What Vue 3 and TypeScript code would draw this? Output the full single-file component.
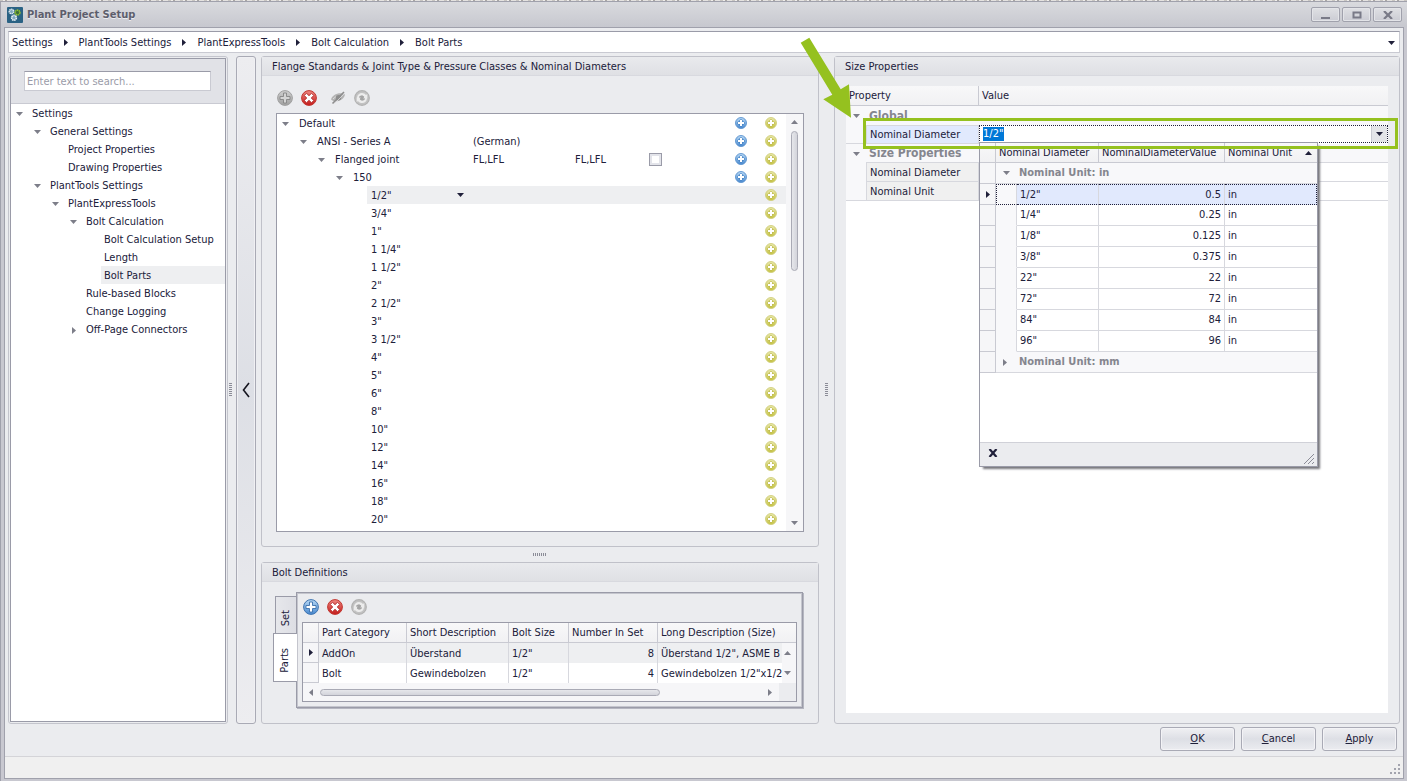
<script setup lang="ts">
import { onMounted, ref } from 'vue'

interface NavNode {
  label: string
  level: number
  state?: 'open' | 'closed'
  selected?: boolean
}

interface FlangeNode {
  label: string
  level: number
  open?: boolean
  region?: string
  joint?: string
  checkbox?: boolean
  blue?: boolean
  selected?: boolean
}

const crumbs: string[] = ['Settings', 'PlantTools Settings', 'PlantExpressTools', 'Bolt Calculation', 'Bolt Parts']

const navNodes: NavNode[] = [
  { label: 'Settings', level: 0, state: 'open' },
  { label: 'General Settings', level: 1, state: 'open' },
  { label: 'Project Properties', level: 2 },
  { label: 'Drawing Properties', level: 2 },
  { label: 'PlantTools Settings', level: 1, state: 'open' },
  { label: 'PlantExpressTools', level: 2, state: 'open' },
  { label: 'Bolt Calculation', level: 3, state: 'open' },
  { label: 'Bolt Calculation Setup', level: 4 },
  { label: 'Length', level: 4 },
  { label: 'Bolt Parts', level: 4, selected: true },
  { label: 'Rule-based Blocks', level: 3 },
  { label: 'Change Logging', level: 3 },
  { label: 'Off-Page Connectors', level: 3, state: 'closed' },
]

const sizes: string[] = [
  '1/2"', '3/4"', '1"', '1 1/4"', '1 1/2"', '2"', '2 1/2"', '3"', '3 1/2"',
  '4"', '5"', '6"', '8"', '10"', '12"', '14"', '16"', '18"', '20"',
]

const flangeNodes: FlangeNode[] = [
  { label: 'Default', level: 0, open: true, blue: true },
  { label: 'ANSI - Series A', level: 1, open: true, region: '(German)', blue: true },
  { label: 'Flanged joint', level: 2, open: true, region: 'FL,LFL', joint: 'FL,LFL', checkbox: true, blue: true },
  { label: '150', level: 3, open: true, blue: true },
  ...sizes.map((label, i) => ({ label, level: 4, selected: i === 0 })),
]

const parts = [
  { category: 'AddOn', short: 'Überstand', size: '1/2"', count: 8, long: 'Überstand 1/2", ASME B', current: true },
  { category: 'Bolt', short: 'Gewindebolzen', size: '1/2"', count: 4, long: 'Gewindebolzen 1/2"x1/2', current: false },
]

const diameters = [
  { name: '1/2"', value: '0.5' },
  { name: '1/4"', value: '0.25' },
  { name: '1/8"', value: '0.125' },
  { name: '3/8"', value: '0.375' },
  { name: '22"', value: '22' },
  { name: '72"', value: '72' },
  { name: '84"', value: '84' },
  { name: '96"', value: '96' },
]

const diameter = ref('1/2"')
const search = ref('')
const diameterInput = ref<HTMLInputElement | null>(null)

onMounted(() => {
  diameterInput.value?.focus()
  diameterInput.value?.select()
})
</script>

<template>
  <div class="desktop">
    <svg class="defs" aria-hidden="true">
      <defs>
        <linearGradient id="gBlue" x1="0" y1="0" x2="0" y2="1">
          <stop offset="0" stop-color="#b9d9f5" /><stop offset="1" stop-color="#4788cf" />
        </linearGradient>
        <linearGradient id="gYellow" x1="0" y1="0" x2="0" y2="1">
          <stop offset="0" stop-color="#e9e8ac" /><stop offset="1" stop-color="#c5c240" />
        </linearGradient>
        <linearGradient id="gGrey" x1="0" y1="0" x2="0" y2="1">
          <stop offset="0" stop-color="#cfcfcf" /><stop offset="1" stop-color="#9f9f9f" />
        </linearGradient>
        <linearGradient id="gRed" x1="0" y1="0" x2="0" y2="1">
          <stop offset="0" stop-color="#ee8a83" /><stop offset="1" stop-color="#c41a1a" />
        </linearGradient>
      </defs>
      <symbol id="add-blue" viewBox="0 0 16 16">
        <circle cx="8" cy="8" r="7.4" fill="url(#gBlue)" stroke="#3f74b0" />
        <path d="M6.5 3h3v3.500H13v3H9.500V13h-3V9.500H3v-3h3.500z" fill="#fff" stroke="#3a70ad" stroke-width=".9" />
      </symbol>
      <symbol id="add-grey" viewBox="0 0 16 16">
        <circle cx="8" cy="8" r="7.4" fill="url(#gGrey)" stroke="#a0a0a0" />
        <path d="M6.5 3h3v3.500H13v3H9.500V13h-3V9.500H3v-3h3.500z" fill="#d4d4d4" stroke="#858585" stroke-width=".9" />
      </symbol>
      <symbol id="remove" viewBox="0 0 16 16">
        <circle cx="8" cy="8" r="7.4" fill="url(#gRed)" stroke="#c2352f" />
        <path d="M5.500 3.300 8 5.700l2.500-2.400 2.200 2.200L10.300 8l2.400 2.500-2.200 2.200L8 10.300l-2.500 2.400-2.200-2.200L5.700 8 3.300 5.500z" fill="#fff" stroke="#a81a18" stroke-width=".8" />
      </symbol>
      <symbol id="hide" viewBox="0 0 16 16">
        <path d="M1 9.500c1-5 9-8 14-5-1 6-10 9-14 5z" fill="#b4b4b4" />
        <path d="M3 9c2-2 4-3 6-3" fill="none" stroke="#dedede" />
        <circle cx="8.500" cy="7.700" r="2.700" fill="#8d8d8d" />
        <path d="M2.500 13.500 14 2" stroke="#8d8d8d" stroke-width="1.600" />
        <path d="M4.500 13.500 14.500 3.500" stroke="#e0e0e2" stroke-width=".8" />
      </symbol>
      <symbol id="refresh" viewBox="0 0 16 16">
        <circle cx="8" cy="8" r="7.300" fill="#c2c2c2" stroke="#b2b2b2" stroke-width="1.200" />
        <path d="M3 7.500C3.500 2.500 9.500 1.500 12 5l1.300-1v4.500H9l1.200-1.500C8.500 4.800 5.500 5.200 5 7.500zM13 8.500c-.5 5-6.500 6-9 2.500l-1.300 1V7.500H7L5.800 9c1.700 2.200 4.700 1.800 5.200-.5z" fill="#ececec" />
        <path d="M5 7.500c.8-2.600 4-2.800 5.200-.6L9 8.500h2c-.8 2.600-4 2.800-5.200.6L7 7.500z" fill="#a4a4a4" />
      </symbol>
      <symbol id="plus-blue" viewBox="0 0 12 12">
        <circle cx="6" cy="6" r="5.500" fill="url(#gBlue)" stroke="#5b93cf" stroke-width=".9" />
        <path d="M5 3h2v2h2v2H7v2H5V7H3V5h2z" fill="#fff" stroke="#3d7cc0" stroke-width="1" paint-order="stroke" />
      </symbol>
      <symbol id="plus-yellow" viewBox="0 0 12 12">
        <circle cx="6" cy="6" r="5.500" fill="url(#gYellow)" stroke="#d0ce7c" stroke-width=".9" />
        <path d="M5 3h2v2h2v2H7v2H5V7H3V5h2z" fill="#fff" stroke="#b9b54a" stroke-width="1" paint-order="stroke" />
      </symbol>
      <symbol id="tri-down" viewBox="0 0 7 4"><path d="M0 0h7L3.500 4z" fill="currentColor" /></symbol>
      <symbol id="tri-up" viewBox="0 0 7 4"><path d="M0 4h7L3.500 0z" fill="currentColor" /></symbol>
      <symbol id="tri-right" viewBox="0 0 4 7"><path d="M0 0v7l4-3.500z" fill="currentColor" /></symbol>
      <symbol id="tri-left" viewBox="0 0 4 7"><path d="M4 0v7L0 3.500z" fill="currentColor" /></symbol>
    </svg>

    <div class="backdrop"></div>
    <div class="window">
      <header class="titlebar">
        <svg class="logo" viewBox="0 0 16 16" aria-hidden="true">
          <rect width="16" height="16" rx="1" fill="#2a6284" />
          <circle cx="4.500" cy="4.500" r="2.200" fill="#7fa7bd" stroke="#dce9f0" stroke-width="1.500" stroke-dasharray="1.300 .5" />
          <circle cx="10.500" cy="5.500" r="2.400" fill="#3d6f38" stroke="#8fbf2f" stroke-width="1.600" stroke-dasharray="1.400 .5" />
          <circle cx="7" cy="10.800" r="2.400" fill="#7fa7bd" stroke="#e9f1f5" stroke-width="1.600" stroke-dasharray="1.400 .5" />
        </svg>
        <h1>Plant Project Setup</h1>
        <div class="win-buttons">
          <button type="button" aria-label="Minimize">
            <svg width="10" height="8" viewBox="0 0 10 8"><path d="M0 6h9v2H0z" fill="#797a87" /></svg>
          </button>
          <button type="button" aria-label="Maximize">
            <svg width="10" height="8" viewBox="0 0 10 8"><path d="M1.500 1.500h7v5h-7z" fill="none" stroke="#797a87" stroke-width="2" /></svg>
          </button>
          <button type="button" aria-label="Close">
            <svg width="10" height="8" viewBox="0 0 10 8"><path d="m1 0 8 8M9 0 1 8" stroke="#797a87" stroke-width="2.200" /></svg>
          </button>
        </div>
      </header>

      <div class="client">
        <nav class="crumbs" aria-label="Breadcrumb">
          <template v-for="(c, i) in crumbs" :key="c">
            <svg v-if="i" class="tri-r" aria-hidden="true"><use href="#tri-right" /></svg>
            <a href="#">{{ c }}</a>
          </template>
          <button type="button" class="plain crumb-drop" aria-label="History">
            <svg class="tri-d"><use href="#tri-down" /></svg>
          </button>
        </nav>

        <main class="work">
          <aside class="nav">
            <div class="nav-inner">
              <div class="search">
                <input v-model="search" type="text" placeholder="Enter text to search..." aria-label="Search settings" />
              </div>
              <ul class="nav-tree">
                <li v-for="n in navNodes" :key="n.label" :class="'lv' + n.level">
                  <span class="toggle">
                    <svg v-if="n.state === 'open'" class="tri-d"><use href="#tri-down" /></svg>
                    <svg v-if="n.state === 'closed'" class="tri-r"><use href="#tri-right" /></svg>
                  </span>
                  <a href="#" :class="{ selected: n.selected }">{{ n.label }}</a>
                </li>
              </ul>
            </div>
          </aside>

          <div class="grip vertical"></div>

          <button type="button" class="collapsed" aria-label="Expand panel">
            <svg width="8" height="16" viewBox="0 0 8 16"><path d="M7 1 1.500 8 7 15" fill="none" stroke="#15151f" stroke-width="1.600" /></svg>
          </button>

          <div class="middle">
            <section class="group flanges">
              <h2>Flange Standards &amp; Joint Type &amp; Pressure Classes &amp; Nominal Diameters</h2>
              <div class="tools">
                <button type="button" class="plain" aria-label="Add"><svg class="ico"><use href="#add-grey" /></svg></button>
                <button type="button" class="plain" aria-label="Delete"><svg class="ico"><use href="#remove" /></svg></button>
                <button type="button" class="plain spaced" aria-label="Hide"><svg class="ico"><use href="#hide" /></svg></button>
                <button type="button" class="plain" aria-label="Refresh"><svg class="ico"><use href="#refresh" /></svg></button>
              </div>
              <div class="flange-box">
                <ul class="flange-tree">
                  <li v-for="(n, i) in flangeNodes" :key="i" :class="'lv' + n.level">
                    <span class="toggle"><svg v-if="n.open" class="tri-d"><use href="#tri-down" /></svg></span>
                    <div class="cells" :class="{ selected: n.selected }">
                      <span class="name">{{ n.label }}</span>
                      <span class="drop"><svg v-if="n.selected" class="tri-d dark"><use href="#tri-down" /></svg></span>
                      <span class="region">{{ n.region }}</span>
                      <span class="joint">{{ n.joint }}</span>
                      <span class="check"><input v-if="n.checkbox" type="checkbox" aria-label="Insulated joint" /></span>
                      <span class="act">
                        <button v-if="n.blue" type="button" class="plain" aria-label="Add child"><svg class="ico-s"><use href="#plus-blue" /></svg></button>
                      </span>
                      <span class="act">
                        <button type="button" class="plain" aria-label="Add copy"><svg class="ico-s"><use href="#plus-yellow" /></svg></button>
                      </span>
                    </div>
                  </li>
                </ul>
                <div class="vscroll">
                  <svg class="tri-d"><use href="#tri-up" /></svg>
                  <div class="track"><div class="thumb"></div></div>
                  <svg class="tri-d"><use href="#tri-down" /></svg>
                </div>
              </div>
            </section>

            <div class="grip horizontal"></div>

            <section class="group bolts">
              <h2>Bolt Definitions</h2>
              <div class="tabbed">
                <div class="tabs">
                  <button type="button" class="tab"><span>Set</span></button>
                  <button type="button" class="tab active"><span>Parts</span></button>
                </div>
                <div class="page">
                  <div class="tools">
                    <button type="button" class="plain" aria-label="Add part"><svg class="ico"><use href="#add-blue" /></svg></button>
                    <button type="button" class="plain" aria-label="Delete part"><svg class="ico"><use href="#remove" /></svg></button>
                    <button type="button" class="plain" aria-label="Refresh parts"><svg class="ico"><use href="#refresh" /></svg></button>
                  </div>
                  <div class="grid-box">
                    <table class="parts">
                      <colgroup>
                        <col class="c16" /><col class="c88" /><col class="c102" /><col class="c60" /><col class="c89" /><col /><col class="c14" />
                      </colgroup>
                      <thead>
                        <tr>
                          <th></th><th>Part Category</th><th>Short Description</th><th>Bolt Size</th><th>Number In Set</th><th colspan="2">Long Description (Size)</th>
                        </tr>
                      </thead>
                      <tbody>
                        <tr v-for="(p, i) in parts" :key="p.category" :class="{ current: p.current }">
                          <td class="ind"><svg v-if="p.current" class="tri-r dark"><use href="#tri-right" /></svg></td>
                          <td>{{ p.category }}</td>
                          <td>{{ p.short }}</td>
                          <td>{{ p.size }}</td>
                          <td class="num">{{ p.count }}</td>
                          <td class="long">{{ p.long }}</td>
                          <td class="bar"><svg class="tri-d"><use :href="i === 0 ? '#tri-up' : '#tri-down'" /></svg></td>
                        </tr>
                      </tbody>
                    </table>
                    <div class="hscroll">
                      <svg class="tri-r"><use href="#tri-left" /></svg>
                      <div class="track"><div class="thumb"></div></div>
                      <svg class="tri-r"><use href="#tri-right" /></svg>
                      <div class="corner"></div>
                    </div>
                  </div>
                </div>
              </div>
            </section>
          </div>

          <div class="grip vertical wide"></div>

          <section class="group props">
            <h2>Size Properties</h2>
            <div class="prop-box">
              <table class="prop">
                <colgroup><col class="c20" /><col class="c113" /><col /></colgroup>
                <thead>
                  <tr><th colspan="2">Property</th><th>Value</th></tr>
                </thead>
                <tbody>
                  <tr class="cat">
                    <td class="ind"><svg class="tri-d"><use href="#tri-down" /></svg></td>
                    <td colspan="2">Global</td>
                  </tr>
                  <tr>
                    <td class="ind line"></td>
                    <td class="key focus"><label for="diameter">Nominal Diameter</label></td>
                    <td class="val">
                      <div class="combo">
                        <input id="diameter" ref="diameterInput" v-model="diameter" type="text" size="4" />
                        <button type="button" aria-label="Open list"><svg class="tri-d dark"><use href="#tri-down" /></svg></button>
                        <div class="popup">
                          <table class="list">
                            <colgroup><col class="c16" /><col class="c21" /><col class="c82" /><col class="c126" /><col /></colgroup>
                            <thead>
                              <tr>
                                <th></th>
                                <th colspan="2">Nominal Diameter</th>
                                <th>NominalDiameterValue</th>
                                <th><div class="sorted">Nominal Unit<svg class="tri-d dark"><use href="#tri-up" /></svg></div></th>
                              </tr>
                            </thead>
                            <tbody>
                              <tr class="grp">
                                <td class="ind"></td>
                                <td class="tog"><svg class="tri-d"><use href="#tri-down" /></svg></td>
                                <td colspan="3">Nominal Unit: in</td>
                              </tr>
                              <tr v-for="(d, i) in diameters" :key="d.name" :class="{ hot: i === 0 }">
                                <td class="ind"><svg v-if="i === 0" class="tri-r dark"><use href="#tri-right" /></svg></td>
                                <td class="pad"></td>
                                <td class="cell">{{ d.name }}</td>
                                <td class="cell num">{{ d.value }}</td>
                                <td class="cell last">in</td>
                              </tr>
                              <tr class="grp">
                                <td class="ind"></td>
                                <td class="tog"><svg class="tri-r"><use href="#tri-right" /></svg></td>
                                <td colspan="3">Nominal Unit: mm</td>
                              </tr>
                            </tbody>
                          </table>
                          <div class="popup-foot">
                            <button type="button" class="plain" aria-label="Close list">
                              <svg width="10" height="8" viewBox="0 0 10 8"><path d="m1.500 0 7 8M8.500 0l-7 8" stroke="#20203a" stroke-width="2.200" /></svg>
                            </button>
                            <svg class="sizer" width="12" height="12" viewBox="0 0 12 12"><path d="M1 11 11 1M5 11l6-6M9 11l2-2" stroke="#8b8c97" /></svg>
                          </div>
                        </div>
                        <div class="highlight"></div>
                      </div>
                    </td>
                  </tr>
                  <tr class="cat">
                    <td class="ind"><svg class="tri-d"><use href="#tri-down" /></svg></td>
                    <td colspan="2" class="line">Size Properties</td>
                  </tr>
                  <tr><td class="ind"></td><td class="key">Nominal Diameter</td><td class="val line"></td></tr>
                  <tr><td class="ind line"></td><td class="key">Nominal Unit</td><td class="val line"></td></tr>
                </tbody>
              </table>
            </div>
            <svg class="arrow" width="52" height="83" viewBox="0 0 52 83" aria-hidden="true">
              <path d="M.7 6.700 9.300 1.700 40.700 53.300 49 48.300 51 81.700 23.300 63.300 32.300 58.700z" fill="#95c11f" />
            </svg>
          </section>
        </main>

        <div class="actions">
          <button type="button"><u>O</u>K</button>
          <button type="button"><u>C</u>ancel</button>
          <button type="button"><u>A</u>pply</button>
        </div>
        <footer class="status">
          <svg width="11" height="11" viewBox="0 0 11 11"><path d="M8 0h2v2H8zM4 4h2v2H4zM8 4h2v2H8zM0 8h2v2H0zM4 8h2v2H4zM8 8h2v2H8z" fill="#a3a4ae" /></svg>
        </footer>
      </div>
    </div>
  </div>
</template>

<style>
html, body, #app { height: 100%; }
body { margin: 0; overflow: hidden; }
</style>

<style scoped>
.desktop {
  height: 100vh;
  display: flex;
  flex-direction: column;
  font: 11px/14px Tahoma, "DejaVu Sans Condensed", "Noto Sans", sans-serif;
  color: #20203a;
  overflow: hidden;
}
.desktop * { box-sizing: border-box; }
.defs { position: absolute; width: 0; height: 0; }
h1, h2, ul { margin: 0; padding: 0; font-size: 11px; font-weight: normal; list-style: none; }
a { color: inherit; text-decoration: none; }
button, input { font: inherit; color: inherit; margin: 0; }
svg { display: block; flex: none; }
.plain { border: 0; background: none; padding: 0; display: flex; }
.tri-d { width: 7px; height: 4px; color: #7d7e89; }
.tri-r { width: 4px; height: 7px; color: #7d7e89; }
.dark { color: #20203a; }
.ico { width: 16px; height: 16px; }
.ico-s { width: 12px; height: 12px; }

.backdrop {
  height: 1px;
  background: repeating-linear-gradient(90deg, #c9c6c2 0 3px, #f0eeec 3px 5px, #a9a6a4 5px 7px, #e4e2e0 7px 12px);
}
.window {
  flex: 1;
  min-height: 0;
  display: flex;
  flex-direction: column;
  background: #c8c8d0;
  border: 1px solid #a0a1ac;
  border-right: 0;
  border-bottom: 0;
  padding: 0 3px 2px;
}
.titlebar {
  height: 25px;
  display: flex;
  align-items: center;
  gap: 4px;
  padding: 0 2px 0 6px;
  margin: 0 -3px;
  background: linear-gradient(#d9dade, #c7c8cf);
}
.logo { width: 16px; height: 16px; }
.titlebar h1 { flex: 1; font-size: 11px; font-weight: bold; color: #5d5e6c; text-shadow: 0 1px 0 #ececf0; }
.win-buttons { display: flex; gap: 2px; padding-right: 3px; }
.win-buttons button {
  width: 29px;
  height: 15px;
  padding: 0;
  display: flex;
  align-items: center;
  justify-content: center;
  border: 1px solid #a0a1ac;
  border-radius: 2px;
  background: linear-gradient(#dfe0e4, #cbccd3);
  box-shadow: inset 0 0 0 1px #e3e4e8;
}

.client {
  flex: 1;
  min-height: 0;
  display: flex;
  flex-direction: column;
  border: 1px solid #a0a1ac;
  background: #ebecef;
  padding: 3px 3px 0;
}
.crumbs {
  height: 22px;
  display: flex;
  align-items: center;
  gap: 11px;
  padding: 1px 4px 0 3px;
  background: #fff;
  border: 1px solid #c9cad2;
  border-top-color: #9a9ba8;
}
.crumbs a, .crumb-drop { flex: none; }
.crumbs .tri-r, .crumbs .tri-d { color: #20203a; }
.crumb-drop { margin-left: auto; }

.work {
  flex: 1;
  min-height: 0;
  display: grid;
  grid-template-columns: 220px 8px 20px 5px minmax(0, 558fr) 15px minmax(0, 566fr);
  padding: 3px 0 0;
}
.nav { border: 1px solid #c4c5cd; border-radius: 3px; padding: 1px; display: flex; }
.nav-inner { flex: 1; background: #fff; border: 1px solid #9a9ba8; }
.search { height: 45px; padding: 12px 14px 0 13px; background: #e1e2e7; border-bottom: 1px solid #c9cad2; }
.search input {
  width: 100%;
  height: 20px;
  padding: 0 2px;
  border: 1px solid #c9cad2;
  border-top-color: #9a9ba8;
  border-radius: 0;
  background: #fff;
  display: block;
}
.search input::placeholder { color: #9a9ba8; opacity: 1; }
.nav-tree li { display: flex; height: 18px; }
.nav-tree a { flex: 1; padding: 3px 3px 1px; white-space: nowrap; }
.nav-tree .selected, .cells.selected { background: #eeeff1; }
.toggle { width: 17px; margin-right: 1px; flex: none; display: flex; align-items: center; justify-content: center; padding-top: 2px; }
.lv1 { padding-left: 18px; }
.lv2 { padding-left: 36px; }
.lv3 { padding-left: 54px; }
.lv4 { padding-left: 72px; }

.grip { display: flex; align-items: center; justify-content: center; }
.grip::before { content: ""; }
.grip.vertical::before { width: 3px; height: 14px; background: repeating-linear-gradient(#8b8c97 0 1px, transparent 1px 2px); }
.grip.horizontal::before { width: 14px; height: 3px; background: repeating-linear-gradient(90deg, #8b8c97 0 1px, transparent 1px 2px); }
.grip.vertical { padding-right: 4px; }
.grip.wide { padding-right: 0; }

.collapsed {
  border: 1px solid #a9aab5;
  border-radius: 3px;
  padding: 0;
  display: flex;
  align-items: center;
  justify-content: center;
  background: linear-gradient(#ededf0, #dddfe5 50%, #ededf0);
  box-shadow: inset 0 0 0 1px #f0f0f3;
}

.middle { grid-column: 5; display: flex; flex-direction: column; min-height: 0; min-width: 0; }
.group { position: relative; border: 1px solid #c0c1c9; border-radius: 3px; display: flex; flex-direction: column; min-height: 0; }
.group > h2 {
  height: 19px;
  padding: 3px 10px 1px;
  white-space: nowrap;
  background: linear-gradient(#e9eaed, #dfe0e4);
  border-bottom: 1px solid #d8d9df;
}
.flanges { flex: 1; }
.flanges .tools { padding: 14px 15px 7px; }
.tools { display: flex; gap: 8px; }
.spaced { margin-left: 5px; }
.flange-box { flex: 1; min-height: 0; margin: 0 14px; margin-bottom: 14px; display: flex; background: #fff; border: 1px solid #9a9ba8; }
.flange-tree { flex: 1; overflow: hidden; min-width: 0; }
.flange-tree li { display: flex; height: 18px; }
.cells { flex: 1; min-width: 0; display: flex; align-items: center; padding-left: 4px; white-space: nowrap; }
.flange-tree .name { flex: none; width: 80px; }
.name, .region, .joint { padding-top: 2px; }
.flange-tree .lv0 .name { width: 152px; }
.flange-tree .lv1 .name { width: 134px; }
.flange-tree .lv2 .name { width: 116px; }
.flange-tree .lv3 .name { width: 98px; }
.drop { width: 18px; margin-right: 4px; display: flex; justify-content: center; }
.region { width: 102px; }
.joint { width: 74px; }
.check { flex: 1; display: flex; }
.check input {
  appearance: none;
  width: 13px;
  height: 13px;
  border: 1px solid #9a9ba8;
  border-radius: 0;
  background: #fff;
  box-shadow: inset 0 0 0 2px #e3e4ea;
}
.act { width: 30px; display: flex; justify-content: center; }
.vscroll { width: 17px; background: #f6f6f8; display: flex; flex-direction: column; align-items: center; padding: 6px 0; gap: 7px; }
.track { flex: 1; }
.vscroll .thumb { width: 7px; height: 140px; border: 1px solid #a9aab5; border-radius: 4px; background: linear-gradient(90deg, #e6e7eb, #d3d4db); }

.grip.horizontal { height: 15px; }
.bolts { height: 162px; flex: none; }
.tabbed { flex: 1; display: flex; padding: 10px 15px 15px 11px; }
.tabs { width: 23px; padding-top: 4px; display: flex; flex-direction: column; align-items: flex-end; }
.tab {
  width: 21px;
  height: 37px;
  padding: 6px 0 0;
  display: flex;
  align-items: center;
  justify-content: center;
  border: 1px solid #9a9ba8;
  border-right: 0;
  border-bottom: 0;
  background: linear-gradient(90deg, #e6e7eb, #dddee4);
}
.tab span { writing-mode: vertical-rl; transform: rotate(180deg); }
.tab.active { width: 24px; height: 49px; border-bottom: 1px solid #9a9ba8; background: #fff; position: relative; margin-right: -1px; padding-right: 2px; }
.page { flex: 1; min-width: 0; border: 1px solid #9a9ba8; box-shadow: inset 0 0 0 1px #c4c5cd, 1px 1px 0 #b5b6c0; padding: 6px 5px 5px; display: flex; flex-direction: column; }
.page .tools { padding: 0 1px 7px; }
.grid-box { border: 1px solid #9a9ba8; background: #fff; flex: 1; overflow: hidden; display: flex; flex-direction: column; }

table { border-collapse: separate; border-spacing: 0; table-layout: fixed; width: 100%; }
th { font-weight: normal; text-align: left; background: linear-gradient(#f8f8f9, #f1f1f3); }
th, td { white-space: nowrap; overflow: hidden; padding: 0 4px; }
.c14 { width: 14px; }
.c16 { width: 16px; }
.c20 { width: 20px; }
.c21 { width: 21px; }
.c60 { width: 60px; }
.c82 { width: 82px; }
.c88 { width: 88px; }
.c89 { width: 89px; }
.c102 { width: 102px; }
.c113 { width: 113px; }
.c126 { width: 126px; }
.num { text-align: right; padding-right: 3px; }
td.ind { padding: 0 6px; background: #f6f6f8; }

.parts th { height: 20px; padding: 0 3px; border-right: 1px solid #c9cad2; border-bottom: 1px solid #c9cad2; }
.parts th:last-child { border-right: 0; }
.parts td { height: 20px; padding: 2px 3px 0; border-right: 1px solid #d7d8de; }
.parts td.ind { padding: 0 6px; border-right-color: #c9cad2; border-bottom: 1px solid #c9cad2; }
.parts .long, .parts .bar { border-right: 0; }
.parts .long { padding-right: 0; text-overflow: clip; }
.parts .current td { background: #eeeff1; }
.parts td.bar, .parts .current td.bar, .parts .current td.ind { background: #f6f6f8; }
.parts td.bar { padding: 0 4px 0 2px; }
.hscroll { flex: 1; display: flex; align-items: center; background: #f6f6f8; padding-left: 6px; gap: 7px; }
.hscroll .thumb { width: 77%; height: 7px; border: 1px solid #a9aab5; border-radius: 4px; background: linear-gradient(#e6e7eb, #d3d4db); }
.corner { width: 17px; align-self: stretch; background: #ebecef; }

.props { grid-column: 7; }
.prop-box { flex: 1; margin: 10px 11px; background: #fff; }
.prop th { height: 20px; padding: 0 3px; border-bottom: 1px solid #c9cad2; }
.prop th:first-child { border-right: 1px solid #c9cad2; }
.prop tbody td { height: 19px; padding: 0 3px; }
.prop tbody td.ind { padding: 0 7px; background: #f8f8fa; }
.prop .cat > td { background: #f8f8fa; font-size: 12px; font-weight: bold; color: #85868f; }
.prop .line { border-bottom: 1px solid #d7d8de; }
.prop .key { background: #f0f0f0; border: 1px solid #d7d8de; border-top: 0; }
.prop tbody td.key:not(.focus) { padding-top: 2px; }
.prop .key.focus { background: #e1e9fd; border-top: 1px solid #d7d8de; }
.prop td.val { padding: 0; overflow: visible; vertical-align: top; }

.combo { position: relative; height: 18px; display: flex; border: 1px dotted #20203a; background: #fff; }
.combo > input { flex: 1; min-width: 0; border: 0; outline: 0; padding: 0 3px; background: none; border-radius: 0; }
.combo > input::selection { background: #0078d7; color: #fff; }
.combo > button { width: 16px; border: 0; border-left: 1px solid #c9cad2; border-radius: 0; padding: 0; display: flex; align-items: center; justify-content: center; background: #e3e4e8; }
.popup {
  position: absolute;
  z-index: 2;
  left: -1px;
  top: 16px;
  width: 339px;
  min-height: 325px;
  display: flex;
  flex-direction: column;
  background: #fff;
  border: 1px solid #9a9ba8;
  box-shadow: 3px 3px 2px -1px #76767c;
}
.highlight { position: absolute; z-index: 3; left: -117px; right: -11px; top: -8px; height: 31px; border: 3px solid #95c11f; pointer-events: none; }

.list th { height: 20px; border-bottom: 1px solid #c9cad2; border-right: 1px solid #c9cad2; padding: 0 3px; }
.list th:last-child { border-right: 0; }
.list th:first-child + th { border-right: 1px solid #c9cad2; }
.sorted { display: flex; align-items: center; justify-content: space-between; padding-right: 2px; }
.prop .list tbody td { height: 21px; border-bottom: 1px solid #d7d8de; }
.prop .list tbody td.ind { padding: 0 6px; border-right: 1px solid #c9cad2; border-bottom-color: #c9cad2; background: #f6f6f8; }
.list .grp td { background: #f8f8fa; font-weight: bold; color: #85868f; padding: 0 2px; }
.prop .list tbody td.tog { padding: 0 7px; }
.prop .list tbody td.pad { background: #f8f8fa; border-bottom-color: #f8f8fa; border-right: 1px solid #d7d8de; }
.list .cell { border-right: 1px solid #d7d8de; }
.prop .list .cell.last { border-right: 0; }
.prop .list .hot .cell, .prop .list .hot td.pad { border-top: 1px dotted #20203a; border-bottom: 1px dotted #20203a; }
.prop .list .hot .cell { background: #e1e9fd; }
.prop .list .hot td.pad { border-left: 1px dotted #20203a; }
.prop .list .hot .cell.last { border-right: 1px dotted #20203a; }
.popup-foot { margin-top: auto; height: 24px; display: flex; align-items: center; justify-content: space-between; padding: 0 2px 3px 8px; background: #ebecef; border-top: 1px solid #d0d1d8; }
.sizer { align-self: flex-end; margin-bottom: -2px; }
.arrow { position: absolute; z-index: 4; left: -35px; top: -21px; }

.actions { display: flex; justify-content: flex-end; gap: 6px; padding: 3px 3px 5px; }
.actions button {
  width: 75px;
  height: 24px;
  padding: 0;
  border: 1px solid #a9aab5;
  border-radius: 3px;
  background: linear-gradient(#f0f0f3, #dddfe5 50%, #ebecf0);
  box-shadow: inset 0 0 0 1px #f3f3f6;
}
.status { height: 22px; margin: 0 -3px; display: flex; justify-content: flex-end; align-items: flex-end; padding: 0 2px 3px; background: #f0f0f0; border-top: 1px solid #d4d4d8; }
</style>
